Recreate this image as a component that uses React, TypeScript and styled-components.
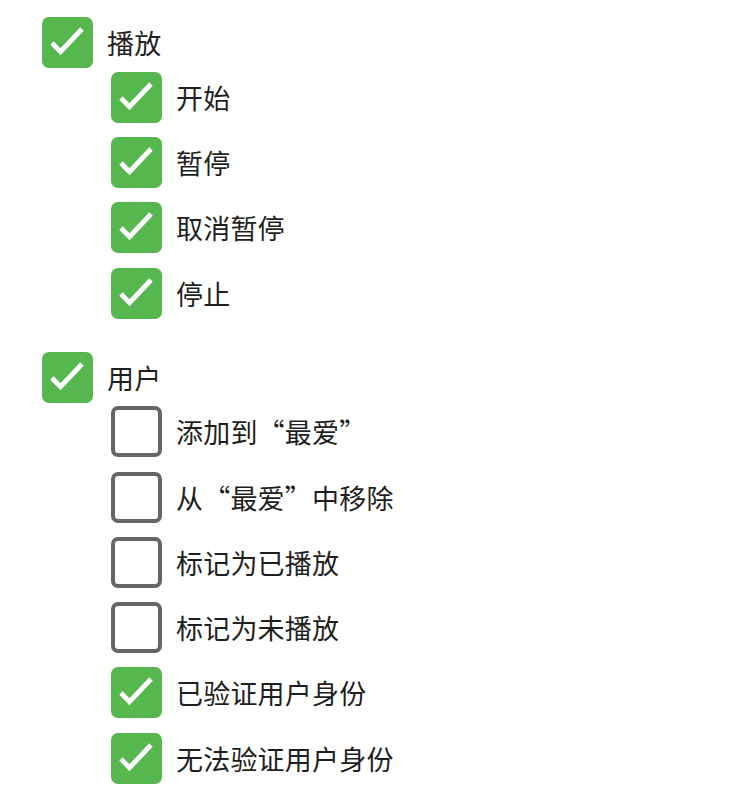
import React from "react";
import styled, { createGlobalStyle } from "styled-components";

const GlobalStyle = createGlobalStyle`
  html, body {
    margin: 0;
    padding: 0;
    background: #ffffff;
  }
  body {
    font-family: "Noto Sans CJK SC", "Noto Sans", sans-serif;
  }
`;

const Page = styled.div`
  display: flex;
  flex-direction: column;
  gap: 33px;
  padding: 17px 0 0 42px;
`;

const Group = styled.div`
  display: flex;
  flex-direction: column;
`;

const Children = styled.div`
  display: flex;
  flex-direction: column;
  gap: 14.3px;
  margin-top: 3.7px;
  padding-left: 69px;
`;

const Row = styled.label`
  display: flex;
  align-items: center;
  gap: 14px;
  height: 51px;
`;

const Box = styled.span<{ $checked: boolean }>`
  box-sizing: border-box;
  flex: none;
  width: 51px;
  height: 51px;
  border-radius: 7px;
  display: flex;
  align-items: center;
  justify-content: center;
  background: ${(p) => (p.$checked ? "#55b74d" : "#ffffff")};
  border: ${(p) => (p.$checked ? "none" : "4px solid #666666")};
`;

const Label = styled.span`
  font-size: 27px;
  letter-spacing: 0.2px;
  line-height: 1;
  color: #1f1f1f;
  white-space: nowrap;
`;

const Check = () => (
  <svg width="51" height="51" viewBox="0 0 51 51">
    <path
      d="M10 26 L18.5 34.7 L40 12"
      fill="none"
      stroke="#ffffff"
      strokeWidth="4.8"
      strokeLinecap="butt"
      strokeLinejoin="miter"
    />
  </svg>
);

const Item = ({ text, checked }: { text: string; checked: boolean }) => (
  <Row>
    <Box $checked={checked}>{checked && <Check />}</Box>
    <Label>{text}</Label>
  </Row>
);

const groups = [
  {
    title: "播放",
    checked: true,
    items: [
      { text: "开始", checked: true },
      { text: "暂停", checked: true },
      { text: "取消暂停", checked: true },
      { text: "停止", checked: true },
    ],
  },
  {
    title: "用户",
    checked: true,
    items: [
      { text: "添加到“最爱”", checked: false },
      { text: "从“最爱”中移除", checked: false },
      { text: "标记为已播放", checked: false },
      { text: "标记为未播放", checked: false },
      { text: "已验证用户身份", checked: true },
      { text: "无法验证用户身份", checked: true },
    ],
  },
];

export default function App() {
  return (
    <>
      <GlobalStyle />
      <Page lang="zh-CN">
        {groups.map((g) => (
          <Group key={g.title}>
            <Item text={g.title} checked={g.checked} />
            <Children>
              {g.items.map((it) => (
                <Item key={it.text} text={it.text} checked={it.checked} />
              ))}
            </Children>
          </Group>
        ))}
      </Page>
    </>
  );
}
